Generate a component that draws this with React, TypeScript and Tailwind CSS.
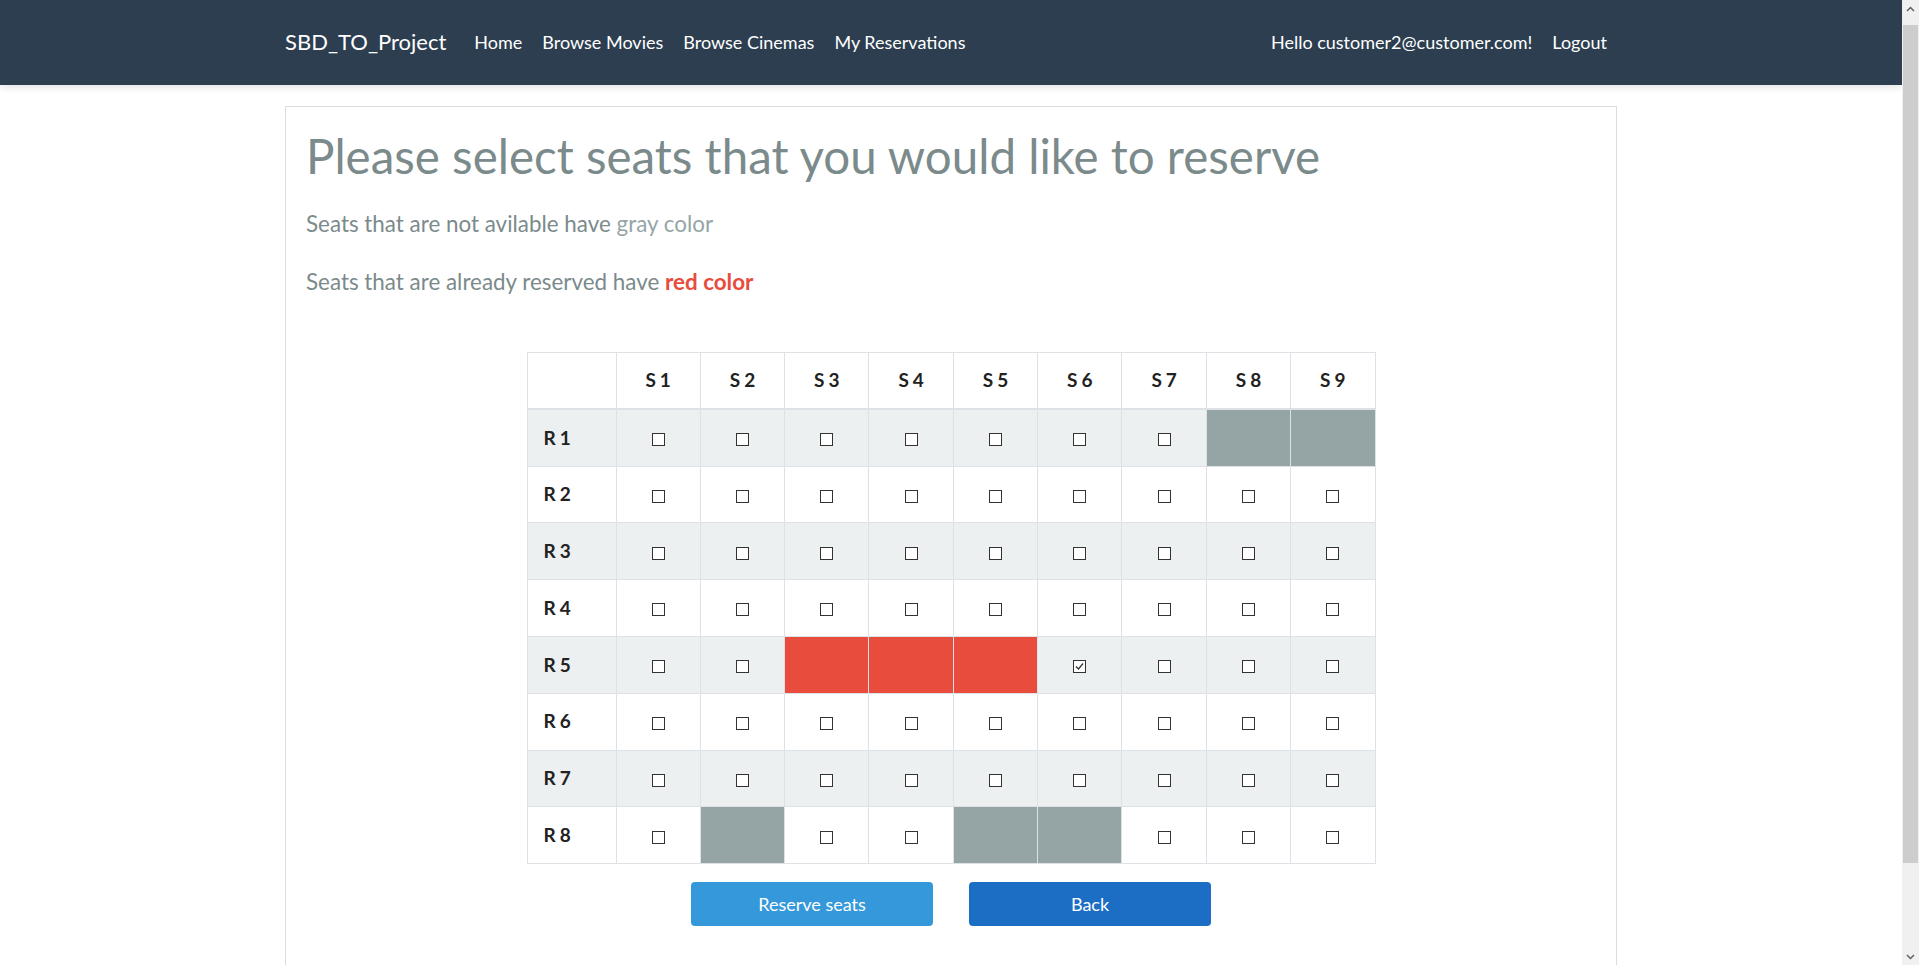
import React from "react";

const gray: Record<string, boolean> = { "1-8": true, "1-9": true, "8-2": true, "8-5": true, "8-6": true };
const red: Record<string, boolean> = { "5-3": true, "5-4": true, "5-5": true };
const checked: Record<string, boolean> = { "5-6": true };

function Box({ on }: { on?: boolean }) {
  return (
    <span className="inline-flex items-center justify-center w-[13px] h-[13px] border border-[#333] bg-white align-middle">
      {on && (
        <svg width="11" height="11" viewBox="0 0 11 11">
          <path d="M2 5.5 L4.5 8 L9 2.5" fill="none" stroke="#333" strokeWidth="1.3" />
        </svg>
      )}
    </span>
  );
}

function Scrollbar() {
  return (
    <div className="w-[17px] h-full bg-[#f0f0f0] flex flex-col items-center shrink-0">
      <div className="h-[17px] w-full flex items-center justify-center">
        <svg width="9" height="6" viewBox="0 0 9 6">
          <path d="M1 5 L4.5 1.5 L8 5" fill="none" stroke="#606060" strokeWidth="1.5" />
        </svg>
      </div>
      <div className="w-[15px] h-[838px] bg-[#cdcdcd] mt-[8px]"></div>
      <div className="flex-1"></div>
      <div className="h-[17px] w-full flex items-center justify-center">
        <svg width="9" height="6" viewBox="0 0 9 6">
          <path d="M1 1 L4.5 4.5 L8 1" fill="none" stroke="#606060" strokeWidth="1.5" />
        </svg>
      </div>
    </div>
  );
}

export default function App() {
  const rows = [1, 2, 3, 4, 5, 6, 7, 8];
  const cols = [1, 2, 3, 4, 5, 6, 7, 8, 9];
  return (
    <div className="flex h-[965px] overflow-hidden bg-white" style={{ fontFamily: "Lato, 'Open Sans', sans-serif" }}>
      <div className="flex-1 h-full overflow-hidden">
        <nav className="h-[85px] bg-[#2c3e50] shadow-[0_2px_8px_rgba(0,0,0,0.12)]">
          <div className="w-[1332px] mx-auto h-full flex items-center text-white">
            <span className="text-[22px] mr-[18px] pb-[2px]">SBD_TO_Project</span>
            <a className="text-[18px] px-[10px]">Home</a>
            <a className="text-[18px] px-[10px]">Browse Movies</a>
            <a className="text-[18px] px-[10px]">Browse Cinemas</a>
            <a className="text-[18px] px-[10px]">My Reservations</a>
            <div className="ml-auto flex items-center">
              <span className="text-[18px] px-[10px]">Hello customer2@customer.com!</span>
              <a className="text-[18px] px-[10px]">Logout</a>
            </div>
          </div>
        </nav>
        <div className="w-[1332px] mx-auto mt-[21px] border border-[#dddddd] px-[20px] pt-[20px] pb-[120px] text-[#7b8a8b]">
          <h1 className="text-[47.5px] leading-[1.2] font-normal">Please select seats that you would like to reserve</h1>
          <p className="text-[22.4px] leading-[1.2] mt-[27px]">
            Seats that are not avilable have <span className="text-[#95a5a6]">gray color</span>
          </p>
          <p className="text-[22.4px] leading-[1.2] mt-[31px]">
            Seats that are already reserved have <span className="text-[#e74c3c] font-bold">red color</span>
          </p>
          <table className="mx-auto mt-[56px] w-[849px] table-fixed border-collapse text-[#222] text-[19px]">
            <colgroup>
              <col className="w-[89px]" />
              {cols.map((c) => (
                <col key={c} />
              ))}
            </colgroup>
            <thead>
              <tr className="h-[57px]">
                <th className="border border-[#dee2e6] border-b-2"></th>
                {cols.map((c) => (
                  <th key={c} className="border border-[#dee2e6] border-b-2 font-bold tracking-[4px] text-center pl-[4px]">
                    S{c}
                  </th>
                ))}
              </tr>
            </thead>
            <tbody>
              {rows.map((r) => (
                <tr key={r} className={r % 2 === 1 ? "h-[56.8px] bg-[#ecf0f1]" : "h-[56.8px] bg-white"}>
                  <td className="border border-[#dee2e6] pl-[16px] font-bold tracking-[4px]">R{r}</td>
                  {cols.map((c) => {
                    const k = `${r}-${c}`;
                    if (gray[k]) return <td key={c} className="border border-[#dee2e6] bg-[#95a5a6]"></td>;
                    if (red[k]) return <td key={c} className="border border-[#dee2e6] bg-[#e74c3c]"></td>;
                    return (
                      <td key={c} className="border border-[#dee2e6] text-center">
                        <Box on={checked[k]} />
                      </td>
                    );
                  })}
                </tr>
              ))}
            </tbody>
          </table>
          <div className="flex justify-center gap-[36px] mt-[18px]">
            <button className="w-[242px] h-[44px] rounded-[4px] bg-[#3498db] text-white text-[18px]">Reserve seats</button>
            <button className="w-[242px] h-[44px] rounded-[4px] bg-[#1c6ec4] text-white text-[18px]">Back</button>
          </div>
        </div>
      </div>
      <Scrollbar />
    </div>
  );
}
